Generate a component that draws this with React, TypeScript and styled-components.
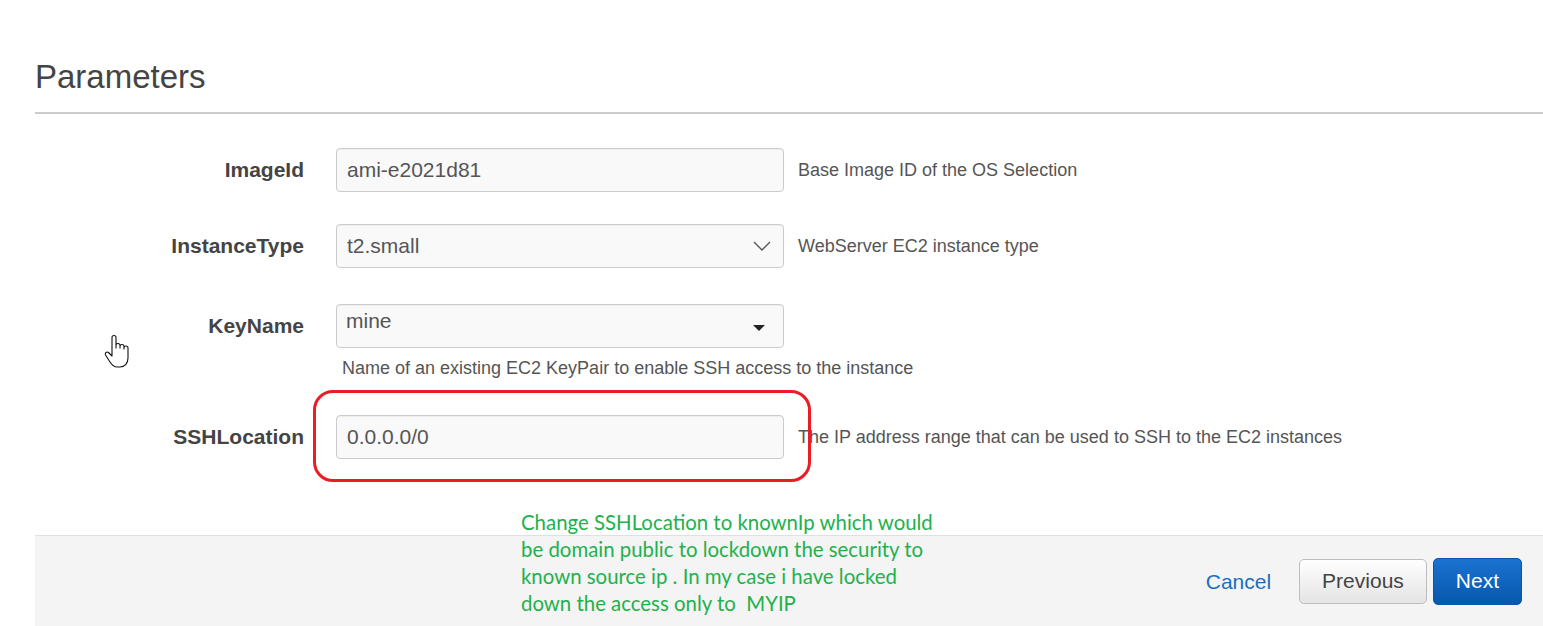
import React from "react";
import styled, { createGlobalStyle } from "styled-components";

const GlobalStyle = createGlobalStyle`
  html, body { margin: 0; padding: 0; background: #fff; overflow: hidden; }
  body { font-family: "Liberation Sans", Arial, sans-serif; }
`;

const Page = styled.div`
  position: relative;
  width: 1543px;
  height: 626px;
  padding-left: 35px;
  box-sizing: border-box;
  display: flex;
  flex-direction: column;
`;

const Title = styled.h2`
  margin: 0;
  padding-top: 57px;
  font-size: 33px;
  font-weight: 400;
  line-height: 40px;
  color: #444;
`;

const Rule = styled.div`
  margin-top: 15px;
  height: 2px;
  background: #cccccc;
`;

const Form = styled.div`
  display: flex;
  flex-direction: column;
  flex: 1;
`;

const Row = styled.div<{ $top: number }>`
  display: grid;
  grid-template-columns: 269px 448px auto;
  align-items: center;
  margin-top: ${(p) => p.$top}px;
`;

const Label = styled.div`
  text-align: right;
  font-weight: 700;
  font-size: 21px;
  color: #444;
`;

const FieldCell = styled.div`
  position: relative;
  margin-left: 32px;
  width: 448px;
`;

const Field = styled.div<{ $alignTop?: boolean }>`
  box-sizing: border-box;
  height: 44px;
  border: 1px solid #cccccc;
  border-radius: 4px;
  background: #f9f9f9;
  box-shadow: inset 0 1px 1px rgba(0, 0, 0, 0.05);
  display: flex;
  align-items: ${(p) => (p.$alignTop ? "flex-start" : "center")};
  justify-content: space-between;
  padding: ${(p) => (p.$alignTop ? "4px 18px 0 9px" : "0 12px 0 10px")};
  font-size: 21px;
  color: #555;
`;

const Desc = styled.div`
  margin-left: 46px;
  font-size: 18px;
  color: #555;
  white-space: nowrap;
`;

const Help = styled.div`
  margin: 10px 0 0 307px;
  font-size: 18px;
  line-height: 20px;
  color: #555;
`;

const Chevron = styled.svg`
  width: 18px;
  height: 10px;
  flex: none;
`;

const Caret = styled.span`
  margin-top: 16px;
  width: 0;
  height: 0;
  border-left: 6px solid transparent;
  border-right: 6px solid transparent;
  border-top: 6px solid #222;
`;

const Highlight = styled.div`
  position: absolute;
  left: -23px;
  right: -27px;
  top: -25px;
  bottom: -23px;
  border: 3px solid #ec1c24;
  border-radius: 20px;
  pointer-events: none;
`;

const Footer = styled.div`
  margin-top: auto;
  height: 91px;
  border-top: 1px solid #e0e0e0;
  background: #f4f4f4;
  display: flex;
  align-items: center;
  justify-content: flex-end;
  padding-right: 21px;
  box-sizing: border-box;
`;

const CancelLink = styled.a`
  font-size: 21px;
  color: #1a6fc0;
  text-decoration: none;
  margin-right: 28px;
  margin-top: 2px;
`;

const Button = styled.button<{ $primary?: boolean }>`
  font-family: "Liberation Sans", Arial, sans-serif;
  font-size: 21px;
  height: ${(p) => (p.$primary ? "47px" : "45px")};
  padding: 0 22px;
  margin-left: ${(p) => (p.$primary ? "6px" : "0")};
  border-radius: 5px;
  border: 1px solid ${(p) => (p.$primary ? "#0a55a6" : "#bdbdbd")};
  color: ${(p) => (p.$primary ? "#fff" : "#444")};
  background: ${(p) =>
    p.$primary
      ? "linear-gradient(#1b72d0, #0658ad)"
      : "linear-gradient(#ffffff, #e4e4e4)"};
  cursor: pointer;
`;

const Note = styled.div`
  position: absolute;
  left: 521px;
  top: 509px;
  font-family: Lato, "Open Sans", sans-serif;
  font-size: 20.4px;
  line-height: 27px;
  color: #22b14c;
  white-space: pre;
`;

const Pointer = styled.svg`
  position: absolute;
  left: 103px;
  top: 333px;
  width: 28px;
  height: 36px;
`;

export default function App() {
  return (
    <>
      <GlobalStyle />
      <Page>
        <Title>Parameters</Title>
        <Rule />
        <Form>
          <Row $top={34}>
            <Label>ImageId</Label>
            <FieldCell>
              <Field>ami-e2021d81</Field>
            </FieldCell>
            <Desc>Base Image ID of the OS Selection</Desc>
          </Row>
          <Row $top={32}>
            <Label>InstanceType</Label>
            <FieldCell>
              <Field>
                t2.small
                <Chevron viewBox="0 0 18 10">
                  <path d="M1 1 L9 9 L17 1" fill="none" stroke="#555" strokeWidth="1.3" />
                </Chevron>
              </Field>
            </FieldCell>
            <Desc>WebServer EC2 instance type</Desc>
          </Row>
          <Row $top={36}>
            <Label>KeyName</Label>
            <FieldCell>
              <Field $alignTop>
                mine
                <Caret />
              </Field>
            </FieldCell>
            <div />
          </Row>
          <Help>Name of an existing EC2 KeyPair to enable SSH access to the instance</Help>
          <Row $top={37}>
            <Label>SSHLocation</Label>
            <FieldCell>
              <Field>0.0.0.0/0</Field>
              <Highlight />
            </FieldCell>
            <Desc>The IP address range that can be used to SSH to the EC2 instances</Desc>
          </Row>
          <Footer>
            <CancelLink href="#">Cancel</CancelLink>
            <Button>Previous</Button>
            <Button $primary>Next</Button>
          </Footer>
        </Form>
        <Note>{"Change SSHLocation to knownIp which would\nbe domain public to lockdown the security to\nknown source ip . In my case i have locked\ndown the access only to  MYIP"}</Note>
        <Pointer viewBox="0 0 28 36">
          <path
            d="M9 20 V4.5 a2 2 0 0 1 4 0 V15 V12.5 a2 2 0 0 1 4 0 V15 V13.5 a2 2 0 0 1 4 0 V16 V15 a2 2 0 0 1 4 0 V25 c0 5 -3 9 -8 9 h-3 c-3 0 -5 -2 -7 -5 L2.5 22 a2 2 0 0 1 3 -2.5 L9 23 Z"
            fill="#fff"
            stroke="#111"
            strokeWidth="1.1"
            strokeLinejoin="round"
          />
        </Pointer>
      </Page>
    </>
  );
}
